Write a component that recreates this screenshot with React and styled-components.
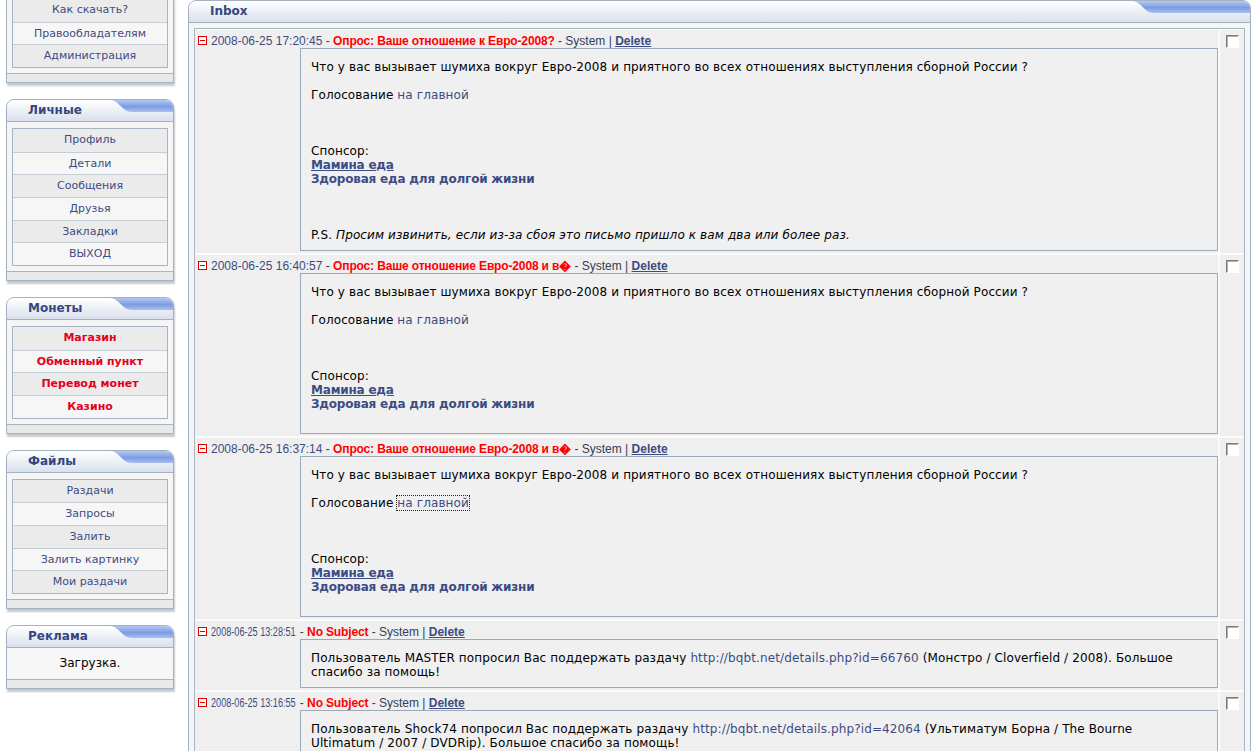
import React from 'react';
import styled, { createGlobalStyle } from 'styled-components';

const GlobalStyle = createGlobalStyle`
  html, body {
    margin: 0;
    padding: 0;
    background: #ffffff;
    overflow: hidden;
  }
  body {
    font-family: "DejaVu Sans", Verdana, sans-serif;
  }
`;

const Page = styled.div`
  display: flex;
  align-items: flex-start;
  gap: 14px;
  padding-left: 6px;
  width: 1257px;
  height: 751px;
  overflow: hidden;
`;

const Sidebar = styled.div`
  width: 168px;
  flex-shrink: 0;
  display: flex;
  flex-direction: column;
  gap: 16px;
  margin-top: -3px;
`;

const Box = styled.div`
  box-sizing: border-box;
  width: 168px;
  border: 1px solid #a4b1bf;
  border-radius: ${(p) => (p.$cut ? '0' : '8px 8px 0 0')};
  background: #f5f5f5;
  box-shadow: 1px 3px 2px rgba(90, 100, 115, 0.35);
`;

const BoxHeader = styled.div`
  display: flex;
  align-items: flex-start;
  height: 21px;
  border-bottom: 1px solid #a4b1bf;
  border-radius: 7px 7px 0 0;
  overflow: hidden;
  background: linear-gradient(#ffffff, #d9e0ec);
`;

const BoxTitle = styled.div`
  flex: 1;
  padding-left: 21px;
  line-height: 21px;
  font-size: 12px;
  font-weight: bold;
  color: #34477e;
`;

const LinkList = styled.div`
  margin: ${(p) => (p.$cut ? '0 5px' : '6px 5px 0')};
  border: 1px solid #a7b4c1;
`;

const LinkRow = styled.div`
  box-sizing: border-box;
  height: 22.67px;
  line-height: 22px;
  text-align: center;
  font-size: 11px;
  color: ${(p) => (p.$red ? '#e4001d' : '#3c4c83')};
  font-weight: ${(p) => (p.$red ? 'bold' : 'normal')};
  background: #ebebeb;
  &:nth-child(even) {
    background: #f6f6f6;
  }
  & + & {
    border-top: 1px solid #c4ccd5;
  }
`;

const BoxFooter = styled.div`
  margin-top: 5px;
  height: 8px;
  border-top: 1px solid #a7b4c1;
  background: #e9e9e9;
`;

const AdBody = styled.div`
  height: 31px;
  line-height: 31px;
  text-align: center;
  font-size: 12px;
  color: #000;
  background: #f7f7f7;
  & + ${BoxFooter} {
    margin-top: 0;
  }
`;

const Panel = styled.div`
  box-sizing: border-box;
  width: 1063px;
  flex-shrink: 0;
  border: 1px solid #a4b1bf;
  border-radius: 8px 8px 0 0;
  background: #f5f5f5;
`;

const PanelBody = styled.div`
  padding: 5px 5px 0 5px;
`;

const MessageTable = styled.div`
  display: grid;
  grid-template-columns: 1fr 24px;
  gap: 2px;
  padding-top: 1px;
  border: 1px solid #a9b5c1;
  background: #fbfbfb;
`;

const MessageCell = styled.div`
  padding: 2px 0 2px 3px;
  background: #efefef;
`;

const CheckCell = styled.div`
  padding: 5px 0 0 6px;
  background: #efefef;
`;

const CheckBox = styled.span`
  display: block;
  box-sizing: border-box;
  width: 13px;
  height: 13px;
  border: 1px solid;
  border-color: #7d7b6e #ffffff #ffffff #7d7b6e;
  box-shadow: inset 1px 1px 0 #b3b1a5;
  background: #ffffff;
`;

const MessageHead = styled.div`
  display: flex;
  align-items: center;
  gap: 4px;
  height: 16px;
  padding-top: 1px;
  box-sizing: border-box;
  font-family: "Liberation Sans", Arial, sans-serif;
  font-size: 12px;
  color: #333d57;
  white-space: nowrap;
`;

const DateText = styled.span`
  display: inline-block;
  color: #3c4c83;
  transform: ${(p) => (p.$narrow ? 'scaleX(0.76)' : 'none')};
  transform-origin: left center;
  margin-right: ${(p) => (p.$narrow ? '-26px' : '0')};
`;

const Subject = styled.span`
  color: #ff0000;
  font-weight: bold;
  letter-spacing: -0.15px;
`;

const DeleteLink = styled.a`
  color: #3c4c83;
  font-weight: bold;
  text-decoration: underline;
`;

const MessageBody = styled.div`
  margin-left: 102px;
  padding: 11px 20px 8px 10px;
  border: 1px solid #9caab8;
  background: #f0f0f0;
  font-size: 12px;
  line-height: 14px;
  letter-spacing: 0.12px;
  color: #000;
`;

const Link = styled.a`
  color: #3c4c83;
  text-decoration: none;
  outline: ${(p) => (p.$focused ? '1px dotted #222' : 'none')};
`;

const Sponsor = styled.a`
  color: #3c4c83;
  font-weight: bold;
  letter-spacing: -0.2px;
  text-decoration: ${(p) => (p.$underline ? 'underline' : 'none')};
`;

const Tab = ({ width }) => (
  <svg width={width} height="13" viewBox={`0 0 ${width} 13`} style={{ flexShrink: 0 }}>
    <defs>
      <linearGradient id={`tab${width}`} x1="0" y1="0" x2="0" y2="1">
        <stop offset="0" stopColor="#b4c8f2" />
        <stop offset="0.55" stopColor="#7c9ce2" />
        <stop offset="1" stopColor="#a9bff0" />
      </linearGradient>
    </defs>
    <path d={`M0 0 C9 0 12 12 22 12 L${width} 12 L${width} 0 Z`} fill={`url(#tab${width})`} />
  </svg>
);

const MinusIcon = () => (
  <svg width="9" height="9" viewBox="0 0 9 9" style={{ flexShrink: 0 }}>
    <rect x="0.5" y="0.5" width="8" height="8" fill="#fff" stroke="#e00000" />
    <path d="M2 4.5 H7" stroke="#e00000" />
  </svg>
);

const SideBox = ({ title, links, red }) => (
  <Box>
    <BoxHeader>
      <BoxTitle>{title}</BoxTitle>
      <Tab width={63} />
    </BoxHeader>
    <LinkList>
      {links.map((l) => (
        <LinkRow key={l} $red={red}>
          {l}
        </LinkRow>
      ))}
    </LinkList>
    <BoxFooter />
  </Box>
);

const PollBody = ({ ps, focused }) => (
  <MessageBody>
    Что у вас вызывает шумиха вокруг Евро-2008 и приятного во всех отношениях выступления сборной России ?
    <br />
    <br />
    Голосование <Link $focused={focused}>на главной</Link>
    <br />
    <br />
    <br />
    <br />
    Спонсор:
    <br />
    <Sponsor $underline>Мамина еда</Sponsor>
    <br />
    <Sponsor>Здоровая еда для долгой жизни</Sponsor>
    <br />
    <br />
    {ps && (
      <>
        <br />
        <br />
        P.S. <i>Просим извинить, если из-за сбоя это письмо пришло к вам два или более раз.</i>
      </>
    )}
  </MessageBody>
);

const SupportBody = ({ user, id, title }) => (
  <MessageBody>
    Пользователь {user} попросил Вас поддержать раздачу{' '}
    <Link>http://bqbt.net/details.php?id={id}</Link> {title}. Большое спасибо за помощь!
  </MessageBody>
);

const pollSubject = 'Опрос: Ваше отношение Евро-2008 и в\uFFFD';

const messages = [
  { date: '2008-06-25 17:20:45', subject: 'Опрос: Ваше отношение к Евро-2008?', poll: true, ps: true },
  { date: '2008-06-25 16:40:57', subject: pollSubject, poll: true },
  { date: '2008-06-25 16:37:14', subject: pollSubject, poll: true, focused: true },
  { date: '2008-06-25 13:28:51', subject: 'No Subject', narrow: true, user: 'MASTER', id: '66760', title: '(Монстро / Cloverfield / 2008)' },
  {
    date: '2008-06-25 13:16:55',
    subject: 'No Subject',
    narrow: true,
    user: 'Shock74',
    id: '42064',
    title: '(Ультиматум Борна / The Bourne Ultimatum / 2007 / DVDRip)',
  },
];

const App = () => {
  return (
    <>
      <GlobalStyle />
      <Page>
        <Sidebar>
          <Box $cut>
            <LinkList $cut>
              <LinkRow>Как скачать?</LinkRow>
              <LinkRow>Правообладателям</LinkRow>
              <LinkRow>Администрация</LinkRow>
            </LinkList>
            <BoxFooter />
          </Box>
          <SideBox title="Личные" links={['Профиль', 'Детали', 'Сообщения', 'Друзья', 'Закладки', 'ВЫХОД']} />
          <SideBox title="Монеты" red links={['Магазин', 'Обменный пункт', 'Перевод монет', 'Казино']} />
          <SideBox title="Файлы" links={['Раздачи', 'Запросы', 'Залить', 'Залить картинку', 'Мои раздачи']} />
          <Box>
            <BoxHeader>
              <BoxTitle>Реклама</BoxTitle>
              <Tab width={63} />
            </BoxHeader>
            <AdBody>Загрузка.</AdBody>
            <BoxFooter />
          </Box>
        </Sidebar>

        <Panel>
          <BoxHeader>
            <BoxTitle>Inbox</BoxTitle>
            <Tab width={118} />
          </BoxHeader>
          <PanelBody>
            <MessageTable>
              {messages.map((m) => (
                <React.Fragment key={m.date}>
                  <MessageCell>
                    <MessageHead>
                      <MinusIcon />
                      <span>
                        <DateText $narrow={m.narrow}>{m.date}</DateText> - <Subject>{m.subject}</Subject> - System |{' '}
                        <DeleteLink>Delete</DeleteLink>
                      </span>
                    </MessageHead>
                    {m.poll ? (
                      <PollBody ps={m.ps} focused={m.focused} />
                    ) : (
                      <SupportBody user={m.user} id={m.id} title={m.title} />
                    )}
                  </MessageCell>
                  <CheckCell>
                    <CheckBox />
                  </CheckCell>
                </React.Fragment>
              ))}
            </MessageTable>
          </PanelBody>
        </Panel>
      </Page>
    </>
  );
};

export default App;
